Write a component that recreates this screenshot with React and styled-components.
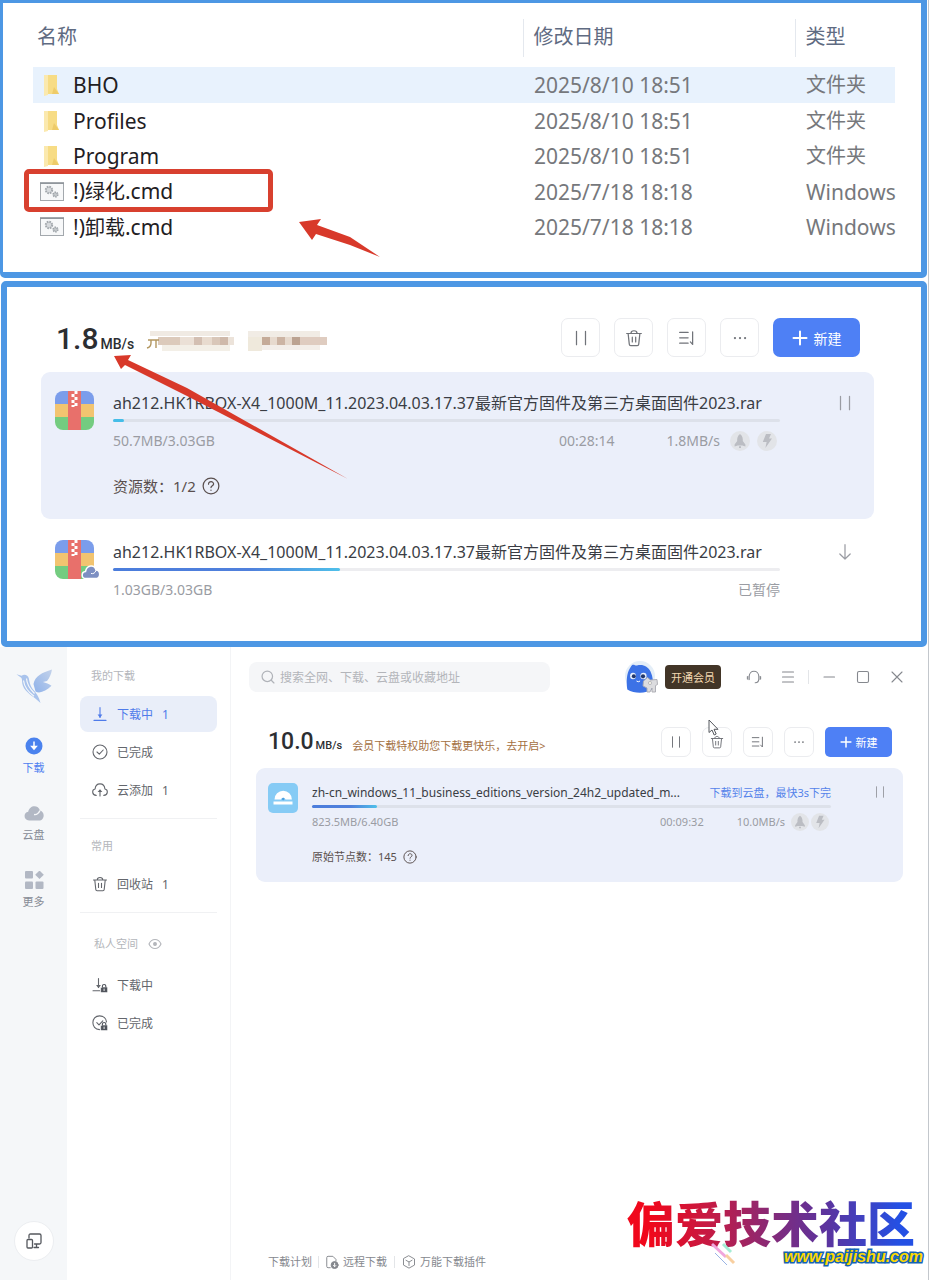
import React from 'react'
import styled, { createGlobalStyle } from 'styled-components'

const GlobalStyle = createGlobalStyle`
  * {
    box-sizing: border-box;
  }
  body {
    margin: 0;
    background-color: #fff;
    font-family: "Noto Sans", "Noto Sans CJK SC", sans-serif;
    color: #43464d;
  }
  button, input {
    font-family: inherit;
    margin: 0;
    padding: 0;
    border: none;
    background: none;
  }
  button {
    cursor: pointer;
  }
  a {
    text-decoration: none;
    color: inherit;
  }
  svg {
    display: block;
    flex: none;
  }
`

const Page = styled.div`
  min-height: 100vh;
  display: flex;
  flex-direction: column;
  border-right: 1px solid #c3c7cc;
`

/* ---------- file list ---------- */

const FilesPanel = styled.section`
  position: relative;
  margin-right: 1px;
  padding: 16px 26px 27px 30px;
  border: 3px solid #4d97e4;
  border-right-width: 6px;
  border-bottom-width: 6px;
  border-radius: 0 0 5px 5px;
`
const FileTable = styled.table`
  width: 100%;
  table-layout: fixed;
  border-collapse: collapse;
  text-align: left;
`
const Col = styled.col`
  width: ${(props) => props.$w};
`
const HeadCell = styled.th`
  height: 38px;
  padding: 0 0 2px ${(props) => (props.$first ? "4px" : "10px")};
  font-size: 20px;
  line-height: 28px;
  font-weight: 400;
  color: #5f6b82;
  border-left: ${(props) => (props.$first ? "none" : "1px solid #e4e8ee")};
`
const Spacer = styled.tr`
  height: 10px;
`
const FileRow = styled.tr`
  height: ${(props) => (props.$tall ? "36px" : "35px")};
  background-color: ${(props) => (props.$active ? "#e8f2fd" : "transparent")};
`
const FileCell = styled.td`
  position: relative;
  padding: 0 0 0 ${(props) => (props.$first ? "7px" : "11px")};
  font-size: ${(props) => (props.$cjk ? "20px" : "21px")};
  line-height: 28px;
  white-space: nowrap;
  color: ${(props) => (props.$first ? "#1f2023" : "#76787c")};
`
const FileName = styled.span`
  display: flex;
  align-items: center;
  gap: 8px;
`
const Cjk = styled.span`
  font-size: 20px;
`
const Highlight = styled.span`
  position: absolute;
  left: -9px;
  top: -5px;
  width: 249px;
  height: 43px;
  border: 5px solid #d8402f;
  border-radius: 5px;
`
const Pointer = styled.svg`
  position: absolute;
  left: ${(props) => props.$x}px;
  top: ${(props) => props.$y}px;
  pointer-events: none;
`

/* ---------- download tasks ---------- */

const TaskPanel = styled.section`
  position: relative;
  margin: 3px 1px 0;
  padding: 31px 47px 16px 34px;
  border: 6px solid #4d97e4;
  border-radius: 5px;
`
const Toolbar = styled.div`
  position: relative;
  display: flex;
  align-items: center;
  height: ${(props) => (props.$big ? "39px" : "30px")};
  margin-bottom: ${(props) => (props.$big ? "15px" : "11px")};
  padding: ${(props) => (props.$big ? "0 14px 0 15px" : "0 11px 0 12px")};
`
const Speed = styled.span`
  padding-top: ${(props) => (props.$big ? "8px" : "4px")};
  font-family: Roboto, sans-serif;
  font-weight: 500;
  font-size: ${(props) => (props.$big ? "30px" : "23px")};
  line-height: 30px;
  color: #2c2e32;
`
const Unit = styled.span`
  margin-left: 2px;
  font-size: ${(props) => (props.$big ? "14px" : "11px")};
`
const Promo = styled.a`
  margin-left: 10px;
  padding-top: 7px;
  font-size: 11px;
  line-height: 18px;
  color: #a4703f;
`
const Mosaic = styled.svg`
  margin: 9px 0 0 12px;
`
const Actions = styled.div`
  display: flex;
  margin-left: auto;
  gap: ${(props) => (props.$big ? "14px" : "11px")};
`
const SquareButton = styled.button`
  display: flex;
  align-items: center;
  justify-content: center;
  width: ${(props) => (props.$big ? "39px" : "30px")};
  height: ${(props) => (props.$big ? "39px" : "30px")};
  border: 1px solid #ebecef;
  border-radius: 7px;
  background-color: #fff;
  color: #707379;
`
const PrimaryButton = styled.button`
  display: flex;
  align-items: center;
  justify-content: center;
  gap: ${(props) => (props.$big ? "6px" : "4px")};
  width: ${(props) => (props.$big ? "87px" : "67px")};
  height: ${(props) => (props.$big ? "39px" : "30px")};
  border-radius: ${(props) => (props.$big ? "7px" : "5px")};
  background-color: #4e80f5;
  color: #fff;
  font-size: ${(props) => (props.$big ? "14px" : "11px")};
`
const MousePointer = styled.svg`
  position: absolute;
  right: 183px;
  top: -8px;
`
const Task = styled.article`
  display: flex;
  align-items: flex-start;
  margin-bottom: ${(props) => (props.$big ? "2px" : "0")};
  padding: ${(props) => (props.$big ? "19px 20px 23px 14px" : "15px 16px 17px 12px")};
  border-radius: 9px;
  background-color: ${(props) => (props.$active ? "#ebeffa" : "transparent")};
`
const TaskIcon = styled.div`
  position: relative;
  margin-right: ${(props) => (props.$big ? "19px" : "14px")};
`
const CloudBadge = styled.svg`
  position: absolute;
  left: 26px;
  top: 24px;
`
const TaskBody = styled.div`
  flex: 1;
  min-width: 0;
  margin-right: ${(props) => (props.$big ? "56px" : "42px")};
`
const TitleLine = styled.div`
  display: flex;
  justify-content: space-between;
  gap: 16px;
  height: ${(props) => (props.$big ? "24px" : "20px")};
  line-height: ${(props) => (props.$big ? "24px" : "20px")};
`
const TaskTitle = styled.span`
  font-size: ${(props) => (props.$big ? "16px" : "12px")};
  color: #3a3d44;
  white-space: nowrap;
`
const CloudLink = styled.a`
  flex: none;
  font-size: 11px;
  color: #5583ea;
`
const Track = styled.div`
  height: 3px;
  margin-top: ${(props) => (props.$big ? "4px" : "2px")};
  border-radius: 2px;
  background-color: ${(props) => (props.$active ? "#dde1ea" : "#ededf0")};
`
const Fill = styled.div`
  height: 3px;
  border-radius: 2px;
  background: ${(props) => (props.$short ? "#45bde8" : "linear-gradient(90deg, #4b7ddc 0%, #5080dc 60%, #4fc0ea 100%)")};
`
const Meta = styled.div`
  display: flex;
  align-items: center;
  margin-top: ${(props) => (props.$big ? "9px" : "6px")};
  height: ${(props) => (props.$big ? "20px" : "16px")};
  font-size: ${(props) => (props.$big ? "14px" : "11px")};
  line-height: ${(props) => (props.$big ? "20px" : "16px")};
  color: #9a9ca3;
`
const Grow = styled.span`
  flex: 1;
`
const Rate = styled.span`
  margin: 0 ${(props) => (props.$big ? "10px" : "6px")} 0 ${(props) => (props.$big ? "52px" : "33px")};
`
const Boosts = styled.span`
  display: flex;
  gap: ${(props) => (props.$big ? "7px" : "2px")};
  margin-right: ${(props) => (props.$big ? "3px" : "2px")};
`
const Extra = styled.div`
  display: flex;
  align-items: center;
  gap: 6px;
  margin-top: ${(props) => (props.$big ? "25px" : "19px")};
  font-size: ${(props) => (props.$big ? "15px" : "11px")};
  line-height: ${(props) => (props.$big ? "20px" : "16px")};
  color: #5a4f4e;
`
const PlainButton = styled.button`
  display: flex;
  padding-top: ${(props) => (props.$big ? "3px" : "2px")};
  color: #9a9ca3;
`

/* ---------- client window ---------- */

const Client = styled.section`
  position: relative;
  flex: 1;
  display: flex;
`
const Rail = styled.nav`
  display: flex;
  flex-direction: column;
  align-items: center;
  width: 67px;
  padding: 20px 0 19px;
  background-color: #f5f7f9;
`
const RailItem = styled.a`
  display: flex;
  flex-direction: column;
  align-items: center;
  gap: 4px;
  height: 67px;
  font-size: 11px;
  line-height: 18px;
  color: ${(props) => (props.$on ? "#4e80f0" : "#878c96")};
`
const RailList = styled.div`
  margin-top: 32px;
`
const DeviceButton = styled.button`
  display: flex;
  align-items: center;
  justify-content: center;
  width: 40px;
  height: 40px;
  margin-top: auto;
  border: 1px solid #eceef1;
  border-radius: 50%;
  background-color: #fff;
  color: #55585e;
`
const SideMenu = styled.aside`
  width: 164px;
  padding: 20px 13px 0;
  border-right: 1px solid #f3f4f6;
`
const Group = styled.div`
  padding-bottom: 10px;
  margin-bottom: ${(props) => (props.$loose ? "22px" : "18px")};
  border-bottom: ${(props) => (props.$last ? "none" : "1px solid #f0f1f3")};
`
const GroupTitle = styled.div`
  display: flex;
  align-items: center;
  gap: 10px;
  margin-bottom: ${(props) => (props.$inset ? "14px" : "11px")};
  padding-left: ${(props) => (props.$inset ? "14px" : "11px")};
  font-size: 11px;
  line-height: 18px;
  color: #b4b6bb;
`
const MenuItem = styled.a`
  display: flex;
  align-items: center;
  height: 36px;
  margin-bottom: 2px;
  padding-left: 12px;
  gap: 9px;
  border-radius: 8px;
  font-size: 12px;
  background-color: ${(props) => (props.$on ? "#e9eef9" : "transparent")};
  color: ${(props) => (props.$on ? "#4f7bea" : "#63666c")};
  &:last-child {
    margin-bottom: 0;
  }
`
const Main = styled.main`
  flex: 1;
  min-width: 0;
  display: flex;
  flex-direction: column;
  padding: 15px 25px 9px;
`
const TopBar = styled.header`
  display: flex;
  align-items: center;
  height: 30px;
  margin: 0 -11px 35px -7px;
`
const Search = styled.label`
  display: flex;
  align-items: center;
  gap: 5px;
  flex: 0 1 301px;
  height: 30px;
  margin-right: auto;
  padding: 0 12px;
  border-radius: 8px;
  background-color: #f5f6f8;
  color: #b0b3b9;
`
const SearchInput = styled.input`
  flex: 1;
  min-width: 0;
  font-size: 12px;
  outline: none;
  &::placeholder {
    color: #b3b5ba;
    opacity: 1;
  }
`
const VipButton = styled.button`
  width: 56px;
  height: 24px;
  margin: 0 16px 0 5px;
  border-radius: 4px;
  background-color: #423527;
  color: #f3d9b2;
  font-size: 11px;
`
const WindowButton = styled.button`
  display: flex;
  justify-content: center;
  width: 34px;
  color: #85888e;
`
const Rule = styled.span`
  width: 1px;
  height: ${(props) => props.$h}px;
  margin: 0 ${(props) => props.$gap}px;
  background-color: #e3e5e8;
`
const Footer = styled.footer`
  display: flex;
  align-items: center;
  margin-top: auto;
  padding-left: 12px;
  font-size: 11px;
  line-height: 18px;
  color: #85888e;
`
const FootLink = styled.a`
  display: flex;
  align-items: center;
  gap: 4px;
`
const SiteMark = styled.div`
  position: absolute;
  right: 5px;
  bottom: 15px;
  width: 296px;
`
const SiteName = styled.div`
  font-family: "Noto Sans CJK SC", sans-serif;
  font-weight: 900;
  font-size: 48px;
  line-height: 56px;
  white-space: nowrap;
  color: transparent;
  background: linear-gradient(90deg, #f0081c 8%, #c01c48 30%, #7c2c80 52%, #5a34a0 68%, #2450e4 92%);
  background-clip: text;
  -webkit-background-clip: text;
`
const SiteUrl = styled.div`
  text-align: right;
  font-family: "Liberation Sans", sans-serif;
  font-weight: 700;
  font-style: italic;
  font-size: 16px;
  line-height: 16px;
  color: #ffd800;
  -webkit-text-stroke: 3px #1464b4;
  paint-order: stroke fill;
`
const Confetti = styled.svg`
  position: absolute;
  left: 82px;
  top: 48px;
`

/* ---------- icons ---------- */

const Icon = ({ size = 16, w = 1.1, children }) => (
  <svg width={size} height={size} viewBox="0 0 16 16" fill="none" stroke="currentColor" strokeWidth={w} strokeLinecap="round" strokeLinejoin="round">
    {children}
  </svg>
)

const PauseIcon = ({ size }) => (
  <Icon size={size}><path d="M4 2v12M12 2v12" /></Icon>
)
const TrashIcon = ({ size }) => (
  <Icon size={size}>
    <path d="M1.5 4h13M5.3 3.8c0-3 5.4-3 5.4 0M2.8 4.2l1 9.3q.1 1.2 1.3 1.2h5.8q1.2 0 1.3-1.2l1-9.3M6.5 7.3v4.2M9.5 7.3v4.2" />
  </Icon>
)
const SortIcon = ({ size }) => (
  <Icon size={size}><path d="M1.5 3h7.5M1.5 7.8h7.5M1.5 12.6h7.5M13 2.5v11.2L11 11.5" /></Icon>
)
const DotsIcon = ({ size }) => (
  <Icon size={size} w={0}>
    <g fill="currentColor"><circle cx="3.5" cy="8" r="1" /><circle cx="8" cy="8" r="1" /><circle cx="12.5" cy="8" r="1" /></g>
  </Icon>
)
const PlusIcon = ({ size }) => (
  <Icon size={size} w={2}><path d="M8 1.5v13M1.5 8h13" /></Icon>
)
const HelpIcon = ({ size }) => (
  <Icon size={size}>
    <circle cx="8" cy="8" r="7" />
    <path d="M5.8 6.4c0-3 4.6-2.8 4.5-.1 0 1.5-2.3 1.5-2.3 3.1M8 11.6v.2" />
  </Icon>
)
const CheckIcon = () => (
  <Icon><circle cx="8" cy="8" r="7" /><path d="M5 8l2.3 2.2L11.2 6" /></Icon>
)
const DownIcon = () => (
  <Icon>
    <path d="M8 1.5v10M2 14.4h12" />
    <path d="M5.6 8.6h4.8L8 11.8z" fill="currentColor" stroke="none" />
  </Icon>
)
const CloudUpIcon = () => (
  <Icon>
    <path d="M4.2 13.4C-.2 13.2-.3 7.6 3.1 7 3.6.2 12.4.2 12.9 7c3.4.6 3.3 6.2-1.1 6.4M8 14V8.4" />
    <path d="M5.6 10L8 7.2l2.4 2.8z" fill="currentColor" stroke="none" />
  </Icon>
)
const Lock = () => (
  <g>
    <rect x="8.6" y="10" width="7" height="5.6" rx="1" fill="#50545c" stroke="#fff" strokeWidth=".6" />
    <path d="M10.4 10V9c0-2 3.4-2 3.4 0v1" stroke="#50545c" />
    <path d="M12.1 12v1.6" stroke="#fff" strokeWidth=".9" />
  </g>
)
const DownLockIcon = () => (
  <Icon>
    <path d="M6.5 1.5v9M1 13.8h6.8" />
    <path d="M4.1 8h4.8l-2.4 3.2z" fill="currentColor" stroke="none" />
    <Lock />
  </Icon>
)
const CheckLockIcon = () => (
  <Icon>
    <path d="M7.5 14.6C-1.4 14.2-1.2.9 7.6.9c4 0 6.6 2.8 6.9 6M4.8 7.6l2.2 2.2 3.8-4" />
    <Lock />
  </Icon>
)
const EyeIcon = () => (
  <svg width="14" height="12" viewBox="0 0 14 12" fill="none" stroke="currentColor" strokeWidth="1.1">
    <path d="M1 6c2.6-6 9.4-6 12 0-2.6 6-9.4 6-12 0z" />
    <circle cx="7" cy="6" r="1.4" fill="currentColor" />
  </svg>
)
const ArrowDownIcon = ({ size }) => (
  <Icon size={size}><path d="M8 1.5v12.6M3.4 9.8L8 14.2l4.6-4.4" /></Icon>
)
const RocketIcon = ({ size }) => (
  <svg width={size} height={size} viewBox="0 0 20 20">
    <circle cx="10" cy="10" r="10" fill="#e2e4e8" />
    <path d="M10 3c2.6 1.8 3 4.6 2.8 7l2.6 3.6v1.8l-3-1H7.6l-3 1v-1.8L7.2 10C7 7.6 7.4 4.8 10 3zM9 15.2h2V17H9z" fill="#bbbdc3" />
  </svg>
)
const BoltIcon = ({ size }) => (
  <svg width={size} height={size} viewBox="0 0 20 20">
    <circle cx="10" cy="10" r="10" fill="#e2e4e8" />
    <path d="M9 3h5l-2 4.6h3L8.4 17l1.2-6H5.8z" fill="#bbbdc3" />
  </svg>
)

const RarIcon = () => (
  <svg width="39" height="39" viewBox="0 0 39 39">
    <defs><clipPath id="rar"><rect width="39" height="39" rx="8" /></clipPath></defs>
    <g clipPath="url(#rar)">
      <rect width="39" height="13" fill="#7b9deb" />
      <rect y="13" width="39" height="13" fill="#f2c470" />
      <rect y="26" width="39" height="13" fill="#74cc80" />
      <rect x="13" width="13" height="39" fill="#e8706b" />
      <path d="M19.5 0h3v3h-3zM16.500 3h3v3h-3zM19.5 6h3v3h-3zM16.5 9h3v3h-3zM19.5 12h3v3h-3zM16.5 14h3v2h-3z" fill="#fff" />
    </g>
  </svg>
)
const IsoIcon = () => (
  <svg width="30" height="30" viewBox="0 0 30 30">
    <rect width="30" height="30" rx="5" fill="#86cbf5" />
    <path d="M6.5 16.5a8.7 8.7 0 0 1 17.4 0h-6.4a2.4 2.4 0 0 0-4.6 0zM5.500 18.400h19v3.200h-19z" fill="#fff" />
    <circle cx="15.2" cy="16" r="1.2" fill="#4d9fe0" />
  </svg>
)
const BirdLogo = () => (
  <svg width="38" height="38" viewBox="0 0 38 38">
    <defs>
      <linearGradient id="wing" x1="0" y1="1" x2="1" y2="0">
        <stop offset="0" stopColor="#8fb2ea" />
        <stop offset="1" stopColor="#c3d2ea" />
      </linearGradient>
    </defs>
    <path d="M18.5 17C20 9 27 5.500 37 2.500c-1 5-2.200 8-5 11.500l-4 1c3 1 6 2 8.500 3.800C31 24 25 27 20.500 24.500z" fill="url(#wing)" />
    <path d="M1.500 7.200l5 1.500c3-2 6.500-.7 7.300 2.500C14.600 15 15 19 19 23.500c3 3.600 5 6.600 6.500 12.500C19 29.500 10.500 26 7.800 18.500c-1-3-.3-5-1.300-7.500z" fill="#a9c3ec" />
    <path d="M8.500 13.500c.8 7 4 11 10.500 15.800M11.500 11.500c.4 6.500 3.400 10.500 8 15" fill="none" stroke="#f5f7f9" strokeWidth="1.2" />
  </svg>
)
const Avatar = () => (
  <svg width="37" height="34" viewBox="0 0 37 34">
    <circle cx="17" cy="16" r="15" fill="#e4eef8" />
    <path d="M8 6.500C10 3 12 6 14 5.500c6-1.500 11 1 13.500 6 2.500 5 3 11 2.300 17.500-7 5-18 5-25.500.500C3 21 4 13 6.500 9z" fill="#3c72e6" />
    <ellipse cx="10" cy="16" rx="2.900" ry="3.200" fill="#e8effc" />
    <ellipse cx="20.500" cy="16" rx="3.100" ry="3.300" fill="#e8effc" />
    <circle cx="10.800" cy="16.300" r="2" fill="#22376b" />
    <circle cx="20" cy="16.300" r="2.100" fill="#22376b" />
    <path d="M13.500 21q1.800 1.500 3.600 0" stroke="#fff" fill="none" />
    <path d="M20.500 21l4-3.500 3 2.500 6.500-.500.500 5-2 1v6.500h-3.500V28l-2 4h-3v-4l-4-2z" fill="#dcdcdf" stroke="#a9a9b0" strokeWidth=".9" />
    <circle cx="27" cy="23" r="1.600" fill="#f6f3e6" stroke="#a9a9b0" strokeWidth=".7" />
  </svg>
)
const BigCloud = () => (
  <svg width="20" height="18" viewBox="0 0 20 16">
    <path d="M5 15.500C-.5 15.500-1 7.500 4.200 6.800 5.500-.5 14.500-.5 16 5.500c5.500 1.500 4.500 10-1 10z" fill="#b2b8c4" />
    <path d="M10 9.500c2.800.5 4.600-1 6-4" fill="none" stroke="#f5f7f9" strokeWidth="1.400" />
  </svg>
)
const FolderIcon = () => (
  <svg width="25" height="24" viewBox="0 0 25 24">
    <path d="M4 2h13v14l2 5H4z" fill="#f7dc85" />
    <path d="M4 2h4v20l-4 1z" fill="#fbe9ae" />
    <path d="M14 14l5 7h-7z" fill="#eecb69" />
  </svg>
)
const CmdIcon = () => (
  <svg width="25" height="20" viewBox="0 0 25 20">
    <rect x=".5" y=".5" width="23" height="18" fill="#f7f8f9" stroke="#a3a8ad" />
    <path d="M0 1.500h24" stroke="#90969c" strokeWidth="1" />
    <circle cx="9" cy="8" r="3.200" fill="#d6d9dc" stroke="#a2a7ac" strokeWidth="2" strokeDasharray="1.600 .9" />
    <circle cx="15.500" cy="12.500" r="2.200" fill="#c6cacd" stroke="#9aa0a5" strokeWidth="1.800" strokeDasharray="1.300 .8" />
  </svg>
)

/* ---------- data ---------- */

const files = [
  { name: "BHO", date: "2025/8/10 18:51", type: "文件夹", folder: true },
  { name: "Profiles", date: "2025/8/10 18:51", type: "文件夹", folder: true },
  { name: "Program", date: "2025/8/10 18:51", type: "文件夹", folder: true },
  { cjk: "绿化", date: "2025/7/18 18:18", type: "Windows", marked: true },
  { cjk: "卸载", date: "2025/7/18 18:18", type: "Windows" },
]

const RAR = "ah212.HK1RBOX-X4_1000M_11.2023.04.03.17.37最新官方固件及第三方桌面固件2023.rar"

/* pixelated strip over the promo text: x, y, width, height, colour */
const blocks = [
  [4, 0, 80, 5, "#f0eae3"], [12, 6, 22, 8, "#dccabb"], [34, 6, 14, 8, "#ebe0d6"],
  [48, 6, 8, 8, "#d3bfb2"], [56, 6, 10, 8, "#e8dbcf"], [66, 6, 8, 8, "#d9c7b9"],
  [74, 6, 8, 8, "#cfb9aa"], [82, 6, 6, 8, "#ece3da"], [16, 14, 68, 6, "#f3efe7"],
  [102, 0, 72, 6, "#f1ece5"], [102, 6, 14, 14, "#efe9dc"], [116, 6, 8, 8, "#c5ab98"],
  [124, 6, 7, 8, "#e7dace"], [131, 6, 8, 8, "#ccb4a3"], [139, 6, 7, 8, "#e6d9cd"],
  [146, 6, 8, 8, "#bca391"], [154, 6, 27, 8, "#dfccc0"], [116, 14, 58, 5, "#f3eee9"],
]

function Files() {
  return (
    <FilesPanel>
      <FileTable>
        <colgroup>
          <Col $w="auto" />
          <Col $w="272px" />
          <Col $w="100px" />
        </colgroup>
        <thead>
          <tr>
            <HeadCell $first>名称</HeadCell>
            <HeadCell>修改日期</HeadCell>
            <HeadCell>类型</HeadCell>
          </tr>
        </thead>
        <tbody>
          <Spacer />
          {files.map((f, i) => (
            <FileRow key={i} $tall={i % 2 === 0} $active={i === 0}>
              <FileCell $first>
                {f.marked && <Highlight />}
                <FileName>
                  {f.folder ? <FolderIcon /> : <CmdIcon />}
                  {f.folder ? f.name : <span>!)<Cjk>{f.cjk}</Cjk>.cmd</span>}
                </FileName>
              </FileCell>
              <FileCell>{f.date}</FileCell>
              <FileCell $cjk={f.folder}>{f.type}</FileCell>
            </FileRow>
          ))}
        </tbody>
      </FileTable>
      <Pointer $x={295} $y={215} width="84" height="42" viewBox="0 0 84 42">
        <path d="M1 4L23 1l-4 6 33 12 30 20-30-12-34-11-4 6z" fill="#d8392a" />
      </Pointer>
    </FilesPanel>
  )
}

function ToolButtons({ big }) {
  const s = big ? 18 : 14
  return (
    <Actions $big={big}>
      <SquareButton $big={big} aria-label="暂停"><PauseIcon size={s} /></SquareButton>
      <SquareButton $big={big} aria-label="删除"><TrashIcon size={s} /></SquareButton>
      <SquareButton $big={big} aria-label="排序"><SortIcon size={s} /></SquareButton>
      <SquareButton $big={big} aria-label="更多"><DotsIcon size={s} /></SquareButton>
      <PrimaryButton $big={big}><PlusIcon size={big ? 16 : 12} />新建</PrimaryButton>
    </Actions>
  )
}

function DownloadTask({ big, active, icon, title, link, progress, size, time, rate, status, extra }) {
  const s = big ? 18 : 14
  return (
    <Task $big={big} $active={active}>
      <TaskIcon $big={big}>{icon}</TaskIcon>
      <TaskBody $big={big}>
        <TitleLine $big={big}>
          <TaskTitle $big={big}>{title}</TaskTitle>
          {link && <CloudLink href="#">{link}</CloudLink>}
        </TitleLine>
        <Track $big={big} $active={active}>
          <Fill $short={progress < 3} style={{ width: `${progress}%` }} />
        </Track>
        <Meta $big={big}>
          <span>{size}</span>
          <Grow />
          {status && <span>{status}</span>}
          {time && <span>{time}</span>}
          {rate && <Rate $big={big}>{rate}</Rate>}
          {rate && (
            <Boosts $big={big}>
              <RocketIcon size={big ? 20 : 18} />
              <BoltIcon size={big ? 20 : 18} />
            </Boosts>
          )}
        </Meta>
        {extra && <Extra $big={big}>{extra}<HelpIcon size={s} /></Extra>}
      </TaskBody>
      <PlainButton $big={big} aria-label={active ? "暂停" : "开始"}>
        {active ? <PauseIcon size={s} /> : <ArrowDownIcon size={s} />}
      </PlainButton>
    </Task>
  )
}

function Tasks() {
  return (
    <TaskPanel>
      <Toolbar $big>
        <Speed $big>1.8<Unit $big>MB/s</Unit></Speed>
        <Mosaic width="182" height="22" viewBox="0 0 182 22">
          {blocks.map(([x, y, w, h, c], i) => (
            <rect key={i} x={x} y={y} width={w} height={h} fill={c} />
          ))}
          <path d="M2 9h11M5 9v3q0 4-4 5M10 9v8" fill="none" stroke="#b39760" strokeWidth="1.400" />
        </Mosaic>
        <ToolButtons big />
      </Toolbar>
      <DownloadTask
        big
        active
        icon={<RarIcon />}
        title={RAR}
        progress={1.6}
        size="50.7MB/3.03GB"
        time="00:28:14"
        rate="1.8MB/s"
        extra="资源数：1/2"
      />
      <DownloadTask
        big
        icon={
          <>
            <RarIcon />
            <CloudBadge width="20" height="16" viewBox="0 0 20 16">
              <path d="M5 14.500C0 14.500 0 8 4.500 7.500 6 .5 13.500.5 15 6c5 .5 5 8.500-.5 8.500z" fill="#7d8fc2" stroke="#fff" strokeWidth="1.500" />
              <path d="M10 9.500c2.500.5 4-.5 5-3" fill="none" stroke="#fff" strokeWidth="1" />
            </CloudBadge>
          </>
        }
        title={RAR}
        progress={34}
        size="1.03GB/3.03GB"
        status="已暂停"
      />
      <Pointer $x={106} $y={66} width="236" height="128" viewBox="0 0 236 128">
        <path d="M1 3l17-1-3 5 59 28 161 91L74 43 12 12l-4 4z" fill="#d8392a" />
      </Pointer>
    </TaskPanel>
  )
}

function ClientWindow() {
  return (
    <Client>
      <Rail>
        <BirdLogo />
        <RailList>
          <RailItem href="#" $on>
            <svg width="18" height="18" viewBox="0 0 18 18">
              <circle cx="9" cy="9" r="8.500" fill="#4a82ee" />
              <path d="M9 4.500v6M6.800 9.500L9 12l2.200-2.500z" fill="#fff" stroke="#fff" strokeWidth="1.500" />
            </svg>
            下载
          </RailItem>
          <RailItem href="#">
            <BigCloud />
            云盘
          </RailItem>
          <RailItem href="#">
            <svg width="20" height="18" viewBox="0 0 20 18" fill="#b2b8c4">
              <rect x="1" y="0" width="8" height="7.500" rx="1" />
              <rect x="1" y="10.500" width="8" height="7.500" rx="1" />
              <rect x="11.500" y="10.500" width="8" height="7.500" rx="1" />
              <path d="M15.500-.5l4.300 4.300-4.300 4.300-4.300-4.300z" />
            </svg>
            更多
          </RailItem>
        </RailList>
        <DeviceButton aria-label="设备">
          <Icon size={16} w={1.3}>
            <path d="M3 5V2.500Q3 1 4.500 1h9Q15 1 15 2.500v7Q15 11 13.500 11H8.500M10.500 11v3M8 14.500h4.500" />
            <rect x="1" y="6.500" width="5.500" height="8.500" rx="1" />
          </Icon>
        </DeviceButton>
      </Rail>
      <SideMenu>
        <Group>
          <GroupTitle>我的下载</GroupTitle>
          <MenuItem href="#" $on><DownIcon />下载中<span>1</span></MenuItem>
          <MenuItem href="#"><CheckIcon />已完成</MenuItem>
          <MenuItem href="#"><CloudUpIcon />云添加<span>1</span></MenuItem>
        </Group>
        <Group $loose>
          <GroupTitle>常用</GroupTitle>
          <MenuItem href="#"><TrashIcon size={16} />回收站<span>1</span></MenuItem>
        </Group>
        <Group $last>
          <GroupTitle $inset>私人空间<EyeIcon /></GroupTitle>
          <MenuItem href="#"><DownLockIcon />下载中</MenuItem>
          <MenuItem href="#"><CheckLockIcon />已完成</MenuItem>
        </Group>
      </SideMenu>
      <Main>
        <TopBar>
          <Search>
            <Icon size={14} w={1.4}><circle cx="7.200" cy="7.200" r="6" /><path d="M12 12l2.800 2.800" /></Icon>
            <SearchInput type="text" aria-label="搜索" placeholder="搜索全网、下载、云盘或收藏地址" />
          </Search>
          <Avatar />
          <VipButton>开通会员</VipButton>
          <WindowButton aria-label="客服">
            <Icon><path d="M3.200 10.500V7.500c0-7 9.600-7 9.600 0v2.500q0 3.600-3.600 3.800M1.400 7.500v2.600M14.600 7.500v2.600M3 7v3.600M13 7v3.600" /></Icon>
          </WindowButton>
          <WindowButton aria-label="菜单">
            <Icon><path d="M2.500 3h11M2.500 8h11M2.500 13h11" /></Icon>
          </WindowButton>
          <Rule $h={14} $gap={3} />
          <WindowButton aria-label="最小化">
            <Icon><path d="M3 8h10.500" /></Icon>
          </WindowButton>
          <WindowButton aria-label="最大化">
            <Icon><rect x="2.500" y="2.500" width="11" height="11" rx="1.500" /></Icon>
          </WindowButton>
          <WindowButton aria-label="关闭">
            <Icon><path d="M3 3l10 10M13 3L3 13" /></Icon>
          </WindowButton>
        </TopBar>
        <Toolbar>
          <Speed>10.0<Unit>MB/s</Unit></Speed>
          <Promo href="#">会员下载特权助您下载更快乐，去开启&gt;</Promo>
          <ToolButtons />
          <MousePointer width="12" height="18" viewBox="0 0 12 18">
            <path d="M1 1v12.500l3-2.500 2.200 5 2-1-2.200-4.700h4z" fill="#fff" stroke="#55585e" />
          </MousePointer>
        </Toolbar>
        <DownloadTask
          active
          icon={<IsoIcon />}
          title="zh-cn_windows_11_business_editions_version_24h2_updated_m..."
          link="下载到云盘，最快3s下完"
          progress={12.6}
          size="823.5MB/6.40GB"
          time="00:09:32"
          rate="10.0MB/s"
          extra="原始节点数：145"
        />
        <Footer>
          <FootLink href="#">下载计划</FootLink>
          <Rule $h={12} $gap={6} />
          <FootLink href="#">
            <Icon size={14}>
              <path d="M6 14.500H3.500Q2 14.500 2 13V3q0-1.500 1.500-1.500H9L12.500 5v2" />
              <circle cx="11" cy="11.500" r="4" fill="currentColor" />
              <path d="M11 9.500v3.600M9.600 12l1.400 1.400 1.400-1.400" stroke="#fff" />
            </Icon>
            远程下载
          </FootLink>
          <Rule $h={12} $gap={7} />
          <FootLink href="#">
            <Icon size={14}>
              <path d="M8 1l6.300 3.500v7L8 15l-6.300-3.500v-7zM4.500 6L8 8l3.500-2M8 8v4" />
            </Icon>
            万能下载插件
          </FootLink>
        </Footer>
      </Main>
      <SiteMark>
        <SiteName>偏爱技术社区</SiteName>
        <SiteUrl>www.paijishu.com</SiteUrl>
        <Confetti width="28" height="28" viewBox="0 0 28 28" fill="none" strokeWidth="3">
          <path d="M3 3l14 13" stroke="#f0a6dc" />
          <path d="M14 3l8 8" stroke="#a4ecd4" />
          <path d="M17 14l8 8" stroke="#f8cfa0" />
          <path d="M6 12l12 12" stroke="#9ab4e4" strokeWidth="1" />
        </Confetti>
      </SiteMark>
    </Client>
  )
}

function App() {
  return (
    <Page>
      <GlobalStyle />
      <Files />
      <Tasks />
      <ClientWindow />
    </Page>
  )
}

export default App
